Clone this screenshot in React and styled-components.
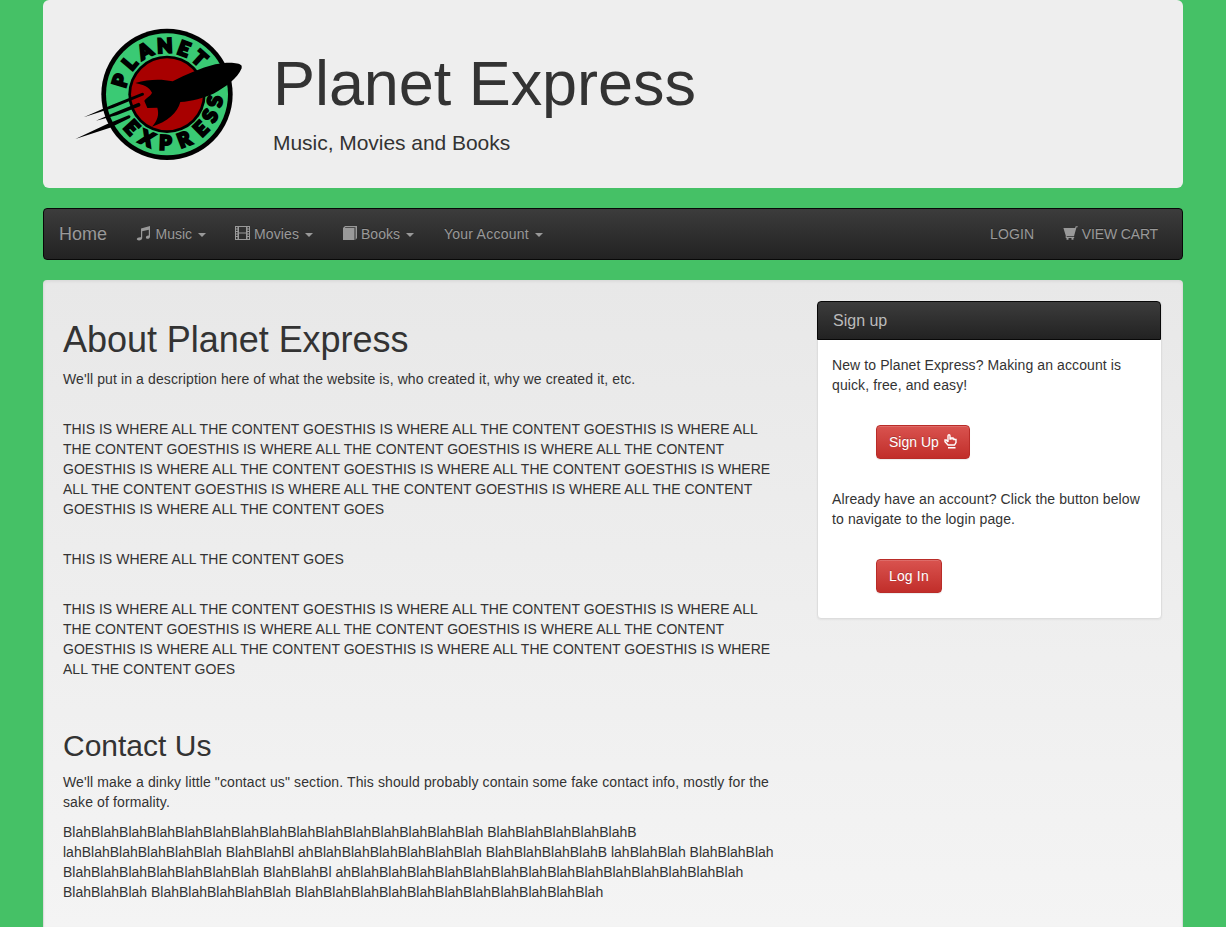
import React from 'react';
import styled, { createGlobalStyle } from 'styled-components';

const Global = createGlobalStyle`
  *, *::before, *::after { box-sizing: border-box; }
  html, body { margin: 0; }
  body {
    background: #45c166;
    color: #333;
    font: 14px/20px "Liberation Sans", Arial, sans-serif;
  }
`;
const Container = styled.div`width: 1140px; margin: 0 auto;`;

const Jumbotron = styled.header`
  display: flex;
  height: 188px;
  padding: 20px 30px;
  background: #eee;
  border-radius: 6px;
  margin-bottom: 20px;
`;
const LogoArt = styled.svg`width: 180px; height: 150px; margin-left: -3px; flex: none;`;
const Brand = styled.div`padding: 29px 0 0 23px;`;
const BrandTitle = styled.h1`margin: 0; font-size: 63px; line-height: 69px; font-weight: 500; letter-spacing: -.06px;`;
const Tagline = styled.p`margin: 10px 0 0; font-size: 21px; line-height: 30px; font-weight: 200; letter-spacing: -.04px;`;

const Navbar = styled.nav`
  display: flex;
  justify-content: space-between;
  height: 52px;
  border: 1px solid #080808;
  border-radius: 4px;
  background: linear-gradient(#3c3c3c, #222);
  margin-bottom: 20px;
`;
const NavGroup = styled.div`display: flex; padding-right: ${p => p.$right || 0}px;`;
const NavLink = styled.a`
  display: flex;
  align-items: center;
  height: 50px;
  padding: 0 ${p => p.$end ?? 15}px 0 15px;
  color: #999;
  text-shadow: 0 -1px 0 rgba(0,0,0,.25);
  font-size: ${p => (p.$brand ? 18 : 14)}px;
  letter-spacing: ${p => p.$track || 0}px;
  white-space: pre;
`;
const Caret = styled.span`
  margin: 2px 0 0 6px;
  border-top: 4px solid #999;
  border-left: 4px solid transparent;
  border-right: 4px solid transparent;
`;
const Icon = styled.svg`
  width: ${p => p.$w || 14}px;
  height: ${p => p.$h || 14}px;
  margin: -2px ${p => p.$gap ?? 4}px 0 ${p => p.$pull || 0}px;
  fill: currentColor;
  flex: none;
`;

const Well = styled.main`
  display: flex;
  align-items: flex-start;
  height: 647px;
  padding: 20px 20px 0 19px;
  border: 1px solid #dcdcdc;
  border-bottom: 0;
  border-radius: 4px 4px 0 0;
  background: linear-gradient(#e8e8e8, #f5f5f5 700px);
  box-shadow: inset 0 1px 3px rgba(0,0,0,.05);
`;
const Article = styled.article`width: 720px; margin-right: 34px; flex: none;`;
const Title = styled.h1`margin: 19px 0 10px; font-size: 36px; line-height: 39px; font-weight: 500; letter-spacing: -.04px;`;
const Subtitle = styled.h2`margin: 50px 0 10px; font-size: 30px; line-height: 33px; font-weight: 500;`;
const Text = styled.p`
  margin: 0 0 ${p => p.$gap ?? 10}px;
  white-space: pre;
  letter-spacing: ${p => p.$track || 0}px;
`;

const Panel = styled.aside`
  width: 345px;
  height: 318px;
  border: 1px solid #ddd;
  border-radius: 4px;
  background: #fff;
  box-shadow: 0 1px 2px rgba(0,0,0,.05);
`;
const PanelHead = styled.h3`
  margin: -1px 0 0 -1px;
  width: 344px;
  height: 39px;
  padding: 0 15px;
  border: 1px solid #080808;
  border-radius: 4px 4px 0 0;
  background: linear-gradient(#3c3c3c, #222);
  color: #bbb;
  font-size: 16px;
  line-height: 38px;
  font-weight: 500;
`;
const PanelBody = styled.div`padding: 15px 14px;`;
const Button = styled.button`
  display: flex;
  align-items: center;
  height: 34px;
  width: ${p => p.$width}px;
  margin: 0 0 30px 44px;
  padding: 0 12px;
  border: 1px solid #b92c28;
  border-radius: 4px;
  background: linear-gradient(#d9534f, #c12e2a);
  box-shadow: inset 0 1px 0 rgba(255,255,255,.15), 0 1px 1px rgba(0,0,0,.075);
  color: #fff;
  font: 14px/20px "Liberation Sans", Arial, sans-serif;
  letter-spacing: ${p => p.$track || 0}px;
  text-shadow: 0 -1px 0 rgba(0,0,0,.2);
  white-space: pre;
`;

const planet = [['P', -73.5], ['L', -50], ['A', -27], ['N', -2.5], ['E', 20.5], ['T', 42]];
const express = [['E', 47], ['X', 24.5], ['P', 2], ['R', -21], ['E', -44.5], ['S', -63.5], ['S', -81.5]];

function Logo() {
  return (
    <LogoArt viewBox="0 0 540 450" role="img">
      <circle cx="291" cy="223" r="197" />
      <circle cx="291" cy="223" r="183" fill="#3aca74" />
      <circle cx="291" cy="223" r="116" />
      <circle cx="291" cy="223" r="108" fill="#a80000" />
      <g fontFamily="Lato, sans-serif" fontWeight="900" fontSize="59" textAnchor="middle" stroke="#000" strokeWidth="7">
        {planet.map(([c, a], i) => <text key={i} transform={`translate(291 223) rotate(${a})`} y="-125">{c}</text>)}
        {express.map(([c, a], i) => <text key={i} transform={`translate(291 223) rotate(${a})`} y="166">{c}</text>)}
      </g>
      <path d="M515 137C505 126 470 126 436 133C390 145 348 163 308 184C272 176 235 178 196 189C220 194 238 201 246 218C242 229 225 235 223 243L232 264L262 263C268 285 262 302 246 320C293 305 322 278 331 246C365 244 401 234 430 221C470 200 502 175 515 145Z" />
      <path d="M217 218Q224 219 221 226L130 263L41 292L125 255ZM206 248Q214 251 210 259L140 286L78 302L130 279ZM176 286Q184 286 180 294L120 323L16 357L110 313Z" />
    </LogoArt>
  );
}

const MusicIcon = () => (
  <Icon $w={15} $h={15} $gap={5} $pull={-1.5} viewBox="0 0 15 15"><path d="M5 2.400 14 .1v10.300c0 1.400-1.100 2.400-2.400 2.400-1 0-1.700-.5-1.700-1.300 0-1.200 1.200-2 2.900-1.900V3.700L6.200 5.200v6.700c0 1.400-1.500 2.500-3.200 2.500-1.300 0-2.200-.5-2.200-1.300 0-1.300 1.800-2.100 4.200-1.900Z" /></Icon>
);
const FilmIcon = () => (
  <Icon $w={15} $pull={-1} viewBox="0 0 15 14"><path fillRule="evenodd" d="M0 0h15v14H0ZM1 1v1.500h1.500V1ZM1 3.500V5h1.500V3.500ZM1 6v1.500h1.500V6ZM1 8.500V10h1.500V8.500ZM1 11v2h1.500v-2ZM12.500 1v1.500H14V1ZM12.500 3.500V5H14V3.500ZM12.500 6v1.500H14V6ZM12.500 8.500V10H14V8.500ZM12.500 11v2H14v-2ZM4 1v5.500h7V1ZM4 7.500V13h7V7.500Z" /></Icon>
);
const BookIcon = () => (
  <Icon viewBox="0 0 14 14"><path d="M0 2 2 0h12v12l-1.500 2V1.200H2.500L1.800 2H11.500v12H0Z" /></Icon>
);
const CartIcon = () => (
  <Icon $w={15} viewBox="0 0 15 14"><path d="M.4 2h11.700l.6-1.800h2v1.100h-1.200L11 10.200H3.700v.7h7.500v1H2.700V9.500ZM3.500 12h2v1.700h-2ZM8.500 12h2v1.700h-2Z" /></Icon>
);
const HandIcon = () => (
  <Icon $w={13} $h={15} $gap={0} $pull={1} viewBox="0 0 13 15"><path fill="none" stroke="currentColor" strokeWidth="1.400" d="M4 8V1.700Q4.100.7 5 .7 6 .7 6 1.700V5h1V4h2v1h1v.5h2v3L10.500 11H4L1 7.800V6h1.300L4 8M4 13.700h7.500" /></Icon>
);

const line = 'THIS IS WHERE ALL THE CONTENT GOES';

export default function App() {
  return (
    <>
      <Global />
      <Container>
        <Jumbotron>
          <Logo />
          <Brand>
            <BrandTitle>Planet Express</BrandTitle>
            <Tagline>Music, Movies and Books</Tagline>
          </Brand>
        </Jumbotron>
        <Navbar>
          <NavGroup>
            <NavLink $brand>Home</NavLink>
            <NavLink><MusicIcon />Music<Caret /></NavLink>
            <NavLink $track={0.1}><FilmIcon />Movies<Caret /></NavLink>
            <NavLink><BookIcon />Books<Caret /></NavLink>
            <NavLink $track={0.25}>Your Account<Caret /></NavLink>
          </NavGroup>
          <NavGroup $right={9}>
            <NavLink $track={0.15} $end={13.5}>LOGIN</NavLink>
            <NavLink $track={-0.15}><CartIcon />VIEW CART</NavLink>
          </NavGroup>
        </Navbar>
        <Well>
          <Article>
            <Title>About Planet Express</Title>
            <Text $gap={30} $track={0.11}>We'll put in a description here of what the website is, who created it, why we created it, etc.</Text>
            <Text $gap={30} $track={0.025}>{`${line}${line}THIS IS WHERE ALL
THE CONTENT GOES${line}THIS IS WHERE ALL THE CONTENT
GOES${line}${line}THIS IS WHERE
ALL THE CONTENT GOES${line}THIS IS WHERE ALL THE CONTENT
GOES${line}`}</Text>
            <Text $gap={30} $track={0.03}>{line}</Text>
            <Text $track={0.025}>{`${line}${line}THIS IS WHERE ALL
THE CONTENT GOES${line}THIS IS WHERE ALL THE CONTENT
GOES${line}${line}THIS IS WHERE
ALL THE CONTENT GOES`}</Text>
            <Subtitle>Contact Us</Subtitle>
            <Text $track={0.12}>{`We'll make a dinky little "contact us" section. This should probably contain some fake contact info, mostly for the
sake of formality.`}</Text>
            <Text>{`${'Blah'.repeat(15)} ${'Blah'.repeat(5)}B
lah${'Blah'.repeat(5)} BlahBlahBl ah${'Blah'.repeat(6)} ${'Blah'.repeat(4)}B lahBlahBlah BlahBlahBlah
${'Blah'.repeat(7)} BlahBlahBl ah${'Blah'.repeat(14)}
BlahBlahBlah ${'Blah'.repeat(5)} ${'Blah'.repeat(11)}`}</Text>
          </Article>
          <Panel>
            <PanelHead>Sign up</PanelHead>
            <PanelBody>
              <Text $gap={30} $track={0.1}>{`New to Planet Express? Making an account is
quick, free, and easy!`}</Text>
              <Button $width={94}>Sign Up <HandIcon /></Button>
              <Text $gap={30} $track={0.11}>{`Already have an account? Click the button below
to navigate to the login page.`}</Text>
              <Button $width={66} $track={0.15}>Log In</Button>
            </PanelBody>
          </Panel>
        </Well>
      </Container>
    </>
  );
}
